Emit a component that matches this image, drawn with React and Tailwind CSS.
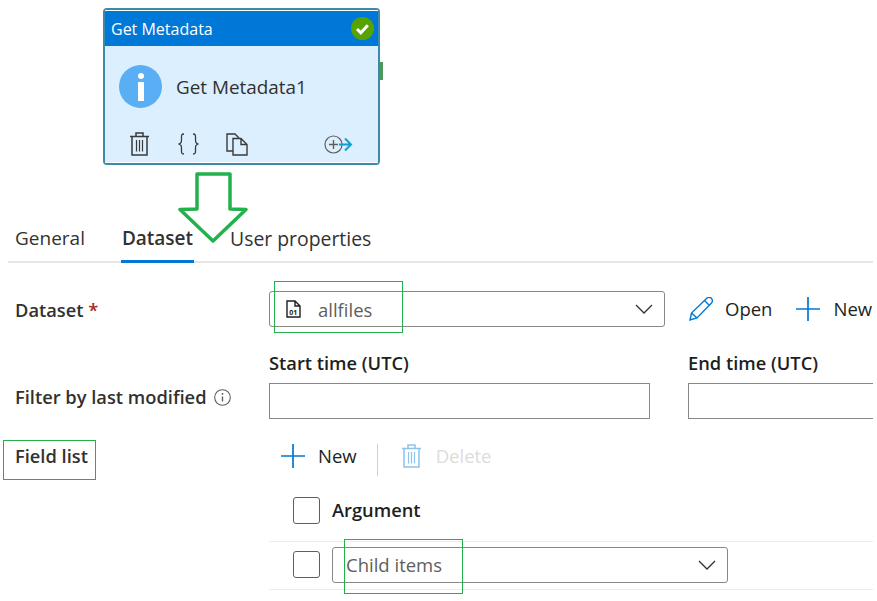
import React from 'react';

const font = { fontFamily: '"Open Sans", sans-serif' };

function Chevron() {
  return (
    <svg width="18" height="10" viewBox="0 0 18 10" fill="none" stroke="#323130" strokeWidth="1.3">
      <path d="M1 1l8 8 8-8" />
    </svg>
  );
}

function Plus() {
  return (
    <svg width="24" height="24" viewBox="0 0 24 24" fill="none" stroke="#0078d4" strokeWidth="1.7">
      <path d="M0 12h24M12 0v24" />
    </svg>
  );
}

function Trash({ color = '#323130', w = 19, h = 24 }) {
  return (
    <svg width={w} height={h} viewBox="0 0 19 24" fill="none" stroke={color} strokeWidth="1.5">
      <path d="M0 4.5h19M6 4.5V1h7v3.5M2 4.5V23h15V4.5" />
      <path d="M6.5 8v11.5M9.5 8v11.5M12.5 8v11.5" strokeWidth="1.2" />
    </svg>
  );
}

function Checkbox() {
  return <div className="w-[27px] h-[27px] shrink-0 rounded-[3px] border border-[#605e5c] bg-white" />;
}

function Node() {
  return (
    <div className="relative ml-[103px] w-[277px] h-[157px] rounded-[4px] border-2 border-[#3d8aa8] bg-[#dcefff] flex flex-col">
      <div className="h-px bg-white" />
      <div className="h-[35px] bg-[#0078d7] flex items-center justify-between pl-[6px] pr-[4px]">
        <span className="text-[16px] text-white pt-[1px]">Get Metadata</span>
        <svg width="23" height="23" viewBox="0 0 23 23">
          <circle cx="11.5" cy="11.5" r="11.5" fill="#57a300" />
          <path d="M6 12l3.8 3.8 7-7.5" fill="none" stroke="#fff" strokeWidth="3" />
        </svg>
      </div>
      <div className="flex items-center gap-[14px] pl-[14px] mt-[19px]">
        <div className="w-[43px] h-[43px] rounded-full bg-[#5aaef3] flex flex-col items-center justify-center gap-[3px]">
          <div className="w-[6px] h-[6px] rounded-full bg-white" />
          <div className="w-[6px] h-[19px] bg-white" />
        </div>
        <span className="text-[18.9px] text-[#323130] pt-[2px]">Get Metadata1</span>
      </div>
      <div className="flex items-center pl-[25px] mt-[24px]">
        <Trash color="#3b3a39" />
        <svg className="ml-[29px]" width="21" height="22" viewBox="0 0 21 22" fill="none" stroke="#3b3a39" strokeWidth="1.3">
          <path d="M6 1C3 1 3.5 3 3.5 6S3.5 10 1 11c2.5 1 2.5 2 2.5 5s-.5 5 2.5 5" />
          <path d="M15 1c3 0 2.5 2 2.5 5s0 4 2.5 5c-2.5 1-2.5 2-2.5 5s.5 5-2.5 5" />
        </svg>
        <svg className="ml-[27px]" width="22" height="23" viewBox="0 0 22 23" fill="none" stroke="#3b3a39" strokeWidth="1.4">
          <path d="M7 18H1V1h8l4 4" />
          <path d="M7 5.5h8l6 6V22H7zM15 5.5v6h6" />
        </svg>
        <svg className="ml-[76px]" width="29" height="19" viewBox="0 0 29 19" fill="none">
          <circle cx="9.5" cy="9.5" r="8.5" stroke="#605e5c" strokeWidth="1.2" />
          <path d="M5 9.5h9M9.5 5v9" stroke="#605e5c" strokeWidth="1.4" />
          <path d="M15 9.5h12M21 3.5l6 6-6 6" stroke="#0f9fd0" strokeWidth="2" />
        </svg>
      </div>
      <div className="mt-auto h-px bg-white" />
      <div className="absolute left-full top-[52px] ml-[2px] w-[3px] h-[18px] bg-[#4c9a5a]" />
    </div>
  );
}

function Tabs() {
  return (
    <div className="ml-[8px] w-[865px] h-[46px] mt-[52px] border-b-2 border-[#e6e6e6] flex items-end text-[19px] text-[#323130]">
      <div className="ml-[7px] h-[45px] flex items-center w-[106px]">General</div>
      <div className="h-[46px] -mb-[2px] w-[73px] flex items-center justify-center font-semibold border-b-[3px] border-[#0078d4]">Dataset</div>
      <div className="ml-[36px] h-[45px] flex items-center text-[19.4px]">User properties</div>
    </div>
  );
}

export default function App() {
  return (
    <div className="relative w-[877px] h-[601px] overflow-hidden bg-white pt-[8px]" style={font}>
      <Node />
      <Tabs />

      {/* dataset row */}
      <div className="flex items-center mt-[28px] h-[36px] text-[18.5px] text-[#323130]">
        <div className="w-[269px] pl-[15px] pt-[1px] font-semibold text-[18.3px]">
          Dataset <span className="text-[#a4262c]">*</span>
        </div>
        <div className="w-[396px] h-[36px] rounded-[3px] border border-[#8a8886] flex items-center justify-between pl-[16px] pr-[11px]">
          <div className="flex items-center gap-[17px]">
            <svg width="15" height="18" viewBox="0 0 15 18" fill="none" stroke="#201f1e" strokeWidth="1.4">
              <path d="M1 1h8l5 5v11H1zM9 1v5h5" />
              <text x="3.2" y="14.5" fontSize="7" fontWeight="700" fill="#201f1e" stroke="none">01</text>
            </svg>
            <span className="text-[#605e5c] pt-[1px]">allfiles</span>
          </div>
          <Chevron />
        </div>
        <svg className="ml-[24px]" width="24" height="24" viewBox="0 0 24 24" fill="none" stroke="#0078d4" strokeWidth="1.4">
          <path d="M1 23l1.5-7L17.5 1.5a3 3 0 0 1 5 4.5L8 21zM2.5 16L8 21M15.5 3.5l5 5" />
        </svg>
        <span className="ml-[12px] text-[#201f1e]">Open</span>
        <div className="ml-[24px] flex"><Plus /></div>
        <span className="ml-[13px] text-[#201f1e]">New</span>
      </div>

      {/* filter row, end time input runs off the right edge in the screenshot */}
      <div className="flex mt-[26px] text-[18.3px]">
        <div className="w-[269px] shrink-0 pl-[15px] pt-[20px] flex items-center gap-[7px] h-[68px] font-semibold text-[#323130]">
          Filter by last modified
          <svg width="17" height="17" viewBox="0 0 17 17" fill="none" stroke="#605e5c" strokeWidth="1.1">
            <circle cx="8.5" cy="8.5" r="7.8" />
            <path d="M8.5 7.5v5" strokeWidth="1.4" />
            <circle cx="8.5" cy="5" r=".9" fill="#605e5c" stroke="none" />
          </svg>
        </div>
        <div className="w-[381px] shrink-0">
          <div className="h-[30px] font-semibold text-[#201f1e] leading-[20px]">Start time (UTC)</div>
          <div className="h-[36px] border border-[#8a8886]" />
        </div>
        <div className="ml-[38px] w-[185px] shrink-0">
          <div className="h-[30px] font-semibold text-[#201f1e] leading-[20px]">End time (UTC)</div>
          <div className="h-[36px] border border-r-0 border-[#8a8886]" />
        </div>
      </div>

      {/* field list */}
      <div className="flex mt-[19px] text-[18.5px]">
        <div className="w-[269px] shrink-0 pl-[15px] pt-[2px] font-semibold text-[18.3px] text-[#323130]">Field list</div>
        <div className="w-[604px] shrink-0">
          <div className="flex items-center h-[32px] pl-[12px]">
            <Plus />
            <span className="ml-[13px] text-[#201f1e]">New</span>
            <div className="ml-[20px] mt-[8px] w-px h-[32px] bg-[#d2d0ce]" />
            <div className="ml-[24px] flex"><Trash color="#8cc4f0" /></div>
            <span className="ml-[15px] text-[#dcdcdc]">Delete</span>
          </div>
          <div className="flex items-center gap-[12px] pl-[24px] h-[70px] pt-[8px] border-b border-[#edebe9]">
            <Checkbox />
            <span className="font-semibold text-[18.3px] text-[#201f1e] -mt-[2px]">Argument</span>
          </div>
          <div className="flex items-center gap-[12px] pl-[24px] h-[48px] pb-[2px] border-b border-[#edebe9]">
            <Checkbox />
            <div className="w-[396px] h-[36px] rounded-[3px] border border-[#8a8886] flex items-center justify-between pl-[13px] pr-[11px]">
              <span className="text-[#605e5c]">Child items</span>
              <Chevron />
            </div>
          </div>
        </div>
      </div>

      {/* annotations drawn over the screenshot */}
      <svg className="absolute left-[178px] top-[171px]" width="71" height="73" viewBox="0 0 71 73" fill="none" stroke="#22b14c" strokeWidth="3.5" strokeLinejoin="round">
        <path d="M19 3h33v35l16 .5L35 70 2 38.5l17-.5z" />
      </svg>
      <div className="absolute left-[274px] top-[281px] w-[129px] h-[52px] border border-[#22b14c]" />
      <div className="absolute left-[3px] top-[440px] w-[93px] h-[40px] border border-[#22b14c]" />
      <div className="absolute left-[344px] top-[539px] w-[119px] h-[55px] border border-[#22b14c]" />
    </div>
  );
}
